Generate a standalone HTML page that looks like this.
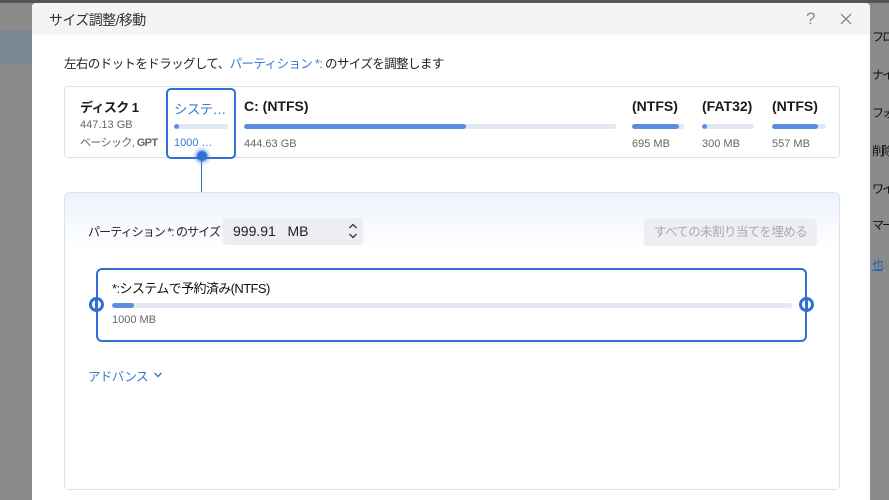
<!DOCTYPE html>
<html><head><meta charset="utf-8"><style>
*{margin:0;padding:0;box-sizing:border-box}
body{width:889px;height:500px;overflow:hidden;background:#8b8b8b;font-family:"Liberation Sans","Noto Sans CJK JP",sans-serif;position:relative;color:#1a1a1a}
.abs{position:absolute;white-space:nowrap}
.dlg{left:32px;top:3px;width:838px;height:497px;background:#fff;border-radius:4px 4px 0 0}
.title{left:0;top:0;width:838px;height:32px;background:#f3f4f6;border-radius:4px 4px 0 0}
.bar{height:5px;border-radius:3px;background:#e2e8f4;overflow:hidden}
.bar i{display:block;height:100%;background:#5b8ee0;border-radius:3px}
.s{font-size:11px;color:#666}
.h{font-size:13px;font-weight:bold;color:#1a1a1a}
.side{font-size:12px;color:#111;left:872px;letter-spacing:-2px}
.j{letter-spacing:-0.6px}
</style></head><body>
<div class="abs" style="left:0;top:0;width:889px;height:3px;background:#555"></div>
<div class="abs" style="left:0;top:30px;width:32px;height:34px;background:#7c8796"></div>
<div class="abs side" style="top:28px">フロ</div>
<div class="abs side" style="top:66px">ナイ</div>
<div class="abs side" style="top:104px">フォ</div>
<div class="abs side" style="top:142px">削除</div>
<div class="abs side" style="top:180px">ワイ</div>
<div class="abs side" style="top:216px">マー</div>
<div class="abs side" style="top:256px;color:#2d5fb5;text-decoration:underline">也</div>

<div class="abs dlg">
 <div class="abs title"></div>
 <div class="abs j" style="left:17px;top:7px;font-size:14px;color:#333">サイズ調整/移動</div>
 <div class="abs" style="left:774px;top:6px;font-size:17px;color:#888">?</div>
 <svg class="abs" style="left:808px;top:10px" width="12" height="12"><path d="M1 1L11 11M11 1L1 11" stroke="#888" stroke-width="1.3"/></svg>
 <div class="abs j" style="left:32px;top:50px;font-size:12.5px;color:#222">左右のドットをドラッグして、<span style="color:#3a78d6">パーティション *:</span> のサイズを調整します</div>

 <div class="abs" style="left:32px;top:83px;width:776px;height:72px;border:1px solid #dde1e6;border-radius:4px"></div>
 <div class="abs h j" style="left:48px;top:94px">ディスク 1</div>
 <div class="abs s" style="left:48px;top:116px">447.13 GB</div>
 <div class="abs s j" style="left:48px;top:131px">ベーシック, <b>GPT</b></div>

 <div class="abs" style="left:134px;top:85px;width:70px;height:71px;border:2px solid #2f6fd6;border-radius:5px;background:#fff"></div>
 <div class="abs j" style="left:142px;top:95px;font-size:13.5px;color:#3a78d6">システ…</div>
 <div class="abs bar" style="left:142px;top:121px;width:54px"><i style="width:5px"></i></div>
 <div class="abs" style="left:142px;top:134px;font-size:11px;color:#3a78d6">1000 …</div>
 <div class="abs" style="left:160px;top:143px;width:20px;height:20px;border-radius:50%;background:radial-gradient(circle,#2f6fd6 0,#2f6fd6 30%,rgba(47,111,214,.25) 45%,rgba(47,111,214,0) 70%)"></div>
 <div class="abs" style="left:169px;top:156px;width:1px;height:37px;background:#2f6fd6"></div>

 <div class="abs h" style="left:212px;top:95px;font-size:14px">C: (NTFS)</div>
 <div class="abs bar" style="left:212px;top:121px;width:372px"><i style="width:222px"></i></div>
 <div class="abs s" style="left:212px;top:135px">444.63 GB</div>

 <div class="abs h" style="left:600px;top:95px;font-size:14px">(NTFS)</div>
 <div class="abs bar" style="left:600px;top:121px;width:52px"><i style="width:47px"></i></div>
 <div class="abs s" style="left:600px;top:135px">695 MB</div>
 <div class="abs h" style="left:670px;top:95px;font-size:14px">(FAT32)</div>
 <div class="abs bar" style="left:670px;top:121px;width:52px"><i style="width:5px"></i></div>
 <div class="abs s" style="left:670px;top:135px">300 MB</div>
 <div class="abs h" style="left:740px;top:95px;font-size:14px">(NTFS)</div>
 <div class="abs bar" style="left:740px;top:121px;width:54px"><i style="width:46px"></i></div>
 <div class="abs s" style="left:740px;top:135px">557 MB</div>

 <div class="abs" style="left:32px;top:189px;width:776px;height:298px;border:1px solid #dde1e6;border-radius:5px;background:linear-gradient(#edf3fc 0,#fff 60px,#fff 100%)"></div>
 <div class="abs" style="left:56px;top:220px;font-size:12px;letter-spacing:-0.9px;color:#222">パーティション *: のサイズ</div>
 <div class="abs" style="left:191px;top:215px;width:140px;height:27px;background:#eceef1;border-radius:4px"></div>
 <div class="abs" style="left:201px;top:220px;font-size:14px;color:#222">999.91&nbsp;&nbsp; MB</div>
 <svg class="abs" style="left:316px;top:219px" width="10" height="18"><path d="M1.5 6L5 2.5L8.5 6M1.5 12L5 15.5L8.5 12" stroke="#333" stroke-width="1.3" fill="none"/></svg>
 <div class="abs j" style="left:612px;top:216px;width:173px;height:27px;background:#eceef1;border-radius:4px;font-size:12.5px;color:#aaa;text-align:center;line-height:27px">すべての未割り当てを埋める</div>

 <div class="abs" style="left:64px;top:265px;width:711px;height:74px;border:2px solid #2f6fd6;border-radius:6px"></div>
 <div class="abs j" style="left:80px;top:275px;font-size:13px;color:#111">*:システムで予約済み(NTFS)</div>
 <div class="abs bar" style="left:80px;top:300px;width:680px"><i style="width:22px"></i></div>
 <div class="abs" style="left:80px;top:311px;font-size:11px;color:#666">1000 MB</div>
 <div class="abs" style="left:57px;top:294px;width:15px;height:15px;border:3px solid #2f6fd6;border-radius:50%;background:#fff"></div>
 <div class="abs" style="left:63px;top:294px;width:3px;height:15px;background:#2f6fd6"></div>
 <div class="abs" style="left:767px;top:294px;width:15px;height:15px;border:3px solid #2f6fd6;border-radius:50%;background:#fff"></div>
 <div class="abs" style="left:773px;top:294px;width:3px;height:15px;background:#2f6fd6"></div>

 <div class="abs j" style="left:56px;top:363px;font-size:12.5px;color:#3a78d6">アドバンス</div>
 <svg class="abs" style="left:121px;top:368px" width="10" height="8"><path d="M1.5 2L5 5.5L8.5 2" stroke="#3a78d6" stroke-width="1.5" fill="none"/></svg>
</div>
</body></html>
